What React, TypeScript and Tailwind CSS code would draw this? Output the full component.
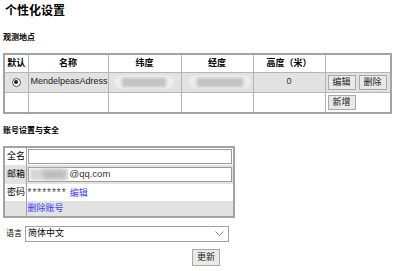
import React from "react";

const font = { fontFamily: '"Liberation Sans", "Noto Sans CJK SC", sans-serif' };

function Blur({ w }: { w: number }) {
  // redacted value, shown as a soft grey pill
  return (
    <div className="flex items-center h-[14px] rounded-full bg-[#ececec] px-[8px]" style={{ width: w }}>
      <div className="h-[9px] w-full bg-[#c2c2c2] blur-[1.5px]" />
    </div>
  );
}

function Btn({ children }: { children: React.ReactNode }) {
  return (
    <button className="h-[15px] px-[4px] border border-[#a9a9a9] bg-[#e9e9e9] text-[9px] leading-[13px] text-[#222]">
      {children}
    </button>
  );
}

export default function App() {
  return (
    <div className="w-[400px] h-[271px] bg-white text-black pl-[3px] pt-[3px]" style={font}>
      <h1 className="text-[12px] leading-[16px] font-bold ml-[2px]">个性化设置</h1>
      <h2 className="mt-[13px] text-[8px] leading-[11px] font-bold">观测地点</h2>

      {/* locations table */}
      <table className="mt-[10px] w-[387px] table-fixed border-collapse border-2 border-[#a3a3a3] text-[9px]">
        <colgroup>
          <col className="w-[24px]" />
          <col className="w-[80px]" />
          <col className="w-[73px]" />
          <col className="w-[72px]" />
          <col className="w-[72px]" />
          <col className="w-[66px]" />
        </colgroup>
        <thead>
          <tr className="h-[18px]">
            {["默认", "名称", "纬度", "经度", "高度（米）", ""].map((h, i) => (
              <th key={i} className="border border-[#b5b5b5] font-bold p-0 text-center">
                {h}
              </th>
            ))}
          </tr>
        </thead>
        <tbody>
          <tr className="h-[20px] bg-[#e2e2e2]">
            <td className="border border-[#b5b5b5] p-0">
              <div className="flex justify-center">
                <span className="flex items-center justify-center w-[9px] h-[9px] rounded-full border border-[#555] bg-white">
                  <span className="w-[4px] h-[4px] rounded-full bg-[#222]" />
                </span>
              </div>
            </td>
            <td className="border border-[#b5b5b5] px-[2px] py-0 text-[#222] whitespace-nowrap">MendelpeasAdress</td>
            <td className="border border-[#b5b5b5] px-[5px] py-0">
              <Blur w={60} />
            </td>
            <td className="border border-[#b5b5b5] pl-[7px] py-0">
              <Blur w={62} />
            </td>
            <td className="border border-[#b5b5b5] p-0 text-center font-normal text-[#333]">0</td>
            <td className="border border-[#b5b5b5] pl-[2px] py-0">
              <div className="flex gap-[3px]">
                <Btn>编辑</Btn>
                <Btn>删除</Btn>
              </div>
            </td>
          </tr>
          <tr className="h-[21px]">
            <td className="border border-[#b5b5b5] p-0" />
            <td className="border border-[#b5b5b5] p-0" />
            <td className="border border-[#b5b5b5] p-0" />
            <td className="border border-[#b5b5b5] p-0" />
            <td className="border border-[#b5b5b5] p-0" />
            <td className="border border-[#b5b5b5] pl-[2px] py-0">
              <Btn>新增</Btn>
            </td>
          </tr>
        </tbody>
      </table>

      <h2 className="mt-[11px] text-[8px] leading-[11px] font-bold">账号设置与安全</h2>

      {/* account table */}
      <table className="mt-[10px] w-[232px] table-fixed border-collapse border-2 border-[#a3a3a3] text-[9px]">
        <colgroup>
          <col className="w-[22px]" />
          <col />
        </colgroup>
        <tbody>
          <tr className="h-[18px]">
            <td className="border-r border-[#a3a3a3] pl-[2px] py-0">全名</td>
            <td className="pl-[1px] pr-[1px] py-0">
              <div className="h-[15px] border border-[#9a9a9a] bg-white" />
            </td>
          </tr>
          <tr className="h-[19px] bg-[#e2e2e2]">
            <td className="border-r border-[#a3a3a3] pl-[2px] py-0">邮箱</td>
            <td className="pl-[1px] pr-[1px] py-0">
              <div className="flex items-center h-[15px] border border-[#9a9a9a] bg-white text-[9.5px] text-[#333]">
                <div className="relative w-[40px] h-full">
                  <div className="absolute inset-[1px] bg-[#d6d6d6] blur-[1.5px]" />
                  <div className="absolute left-[14px] right-[4px] top-[2px] bottom-[2px] bg-[#bdbdbd] blur-[2px]" />
                </div>
                <span className="ml-[1px]">@qq.com</span>
              </div>
            </td>
          </tr>
          <tr className="h-[17px]">
            <td className="border-r border-[#a3a3a3] pl-[2px] py-0">密码</td>
            <td className="pl-[1px] py-0">
              <span className="text-[10px] tracking-[1px] text-[#444]">********</span>
              <a className="ml-[3px] text-[#3b3bff]">编辑</a>
            </td>
          </tr>
          <tr className="h-[16px] bg-[#e2e2e2]">
            <td className="border-r border-[#a3a3a3] p-0" />
            <td className="pl-[1px] py-0">
              <a className="text-[#3b3bff]">删除账号</a>
            </td>
          </tr>
        </tbody>
      </table>

      {/* language */}
      <div className="mt-[8px] flex items-center">
        <span className="ml-[3px] text-[8px] leading-[10px]">语言</span>
        <div className="ml-[3px] flex items-center justify-between w-[204px] h-[16px] border border-[#a3a3a3] bg-white pl-[2px] pr-[4px] text-[9px]">
          <span>简体中文</span>
          <svg width="9" height="6" viewBox="0 0 9 6" fill="none" stroke="#888" strokeWidth="1">
            <path d="M0.5 0.5 L4.5 4.5 L8.5 0.5" />
          </svg>
        </div>
      </div>

      <div className="mt-[7px] w-[217px] flex justify-end">
        <button className="h-[17px] px-[4px] border border-[#a9a9a9] bg-[#e9e9e9] text-[9px] leading-[15px] text-[#222]">
          更新
        </button>
      </div>
    </div>
  );
}
